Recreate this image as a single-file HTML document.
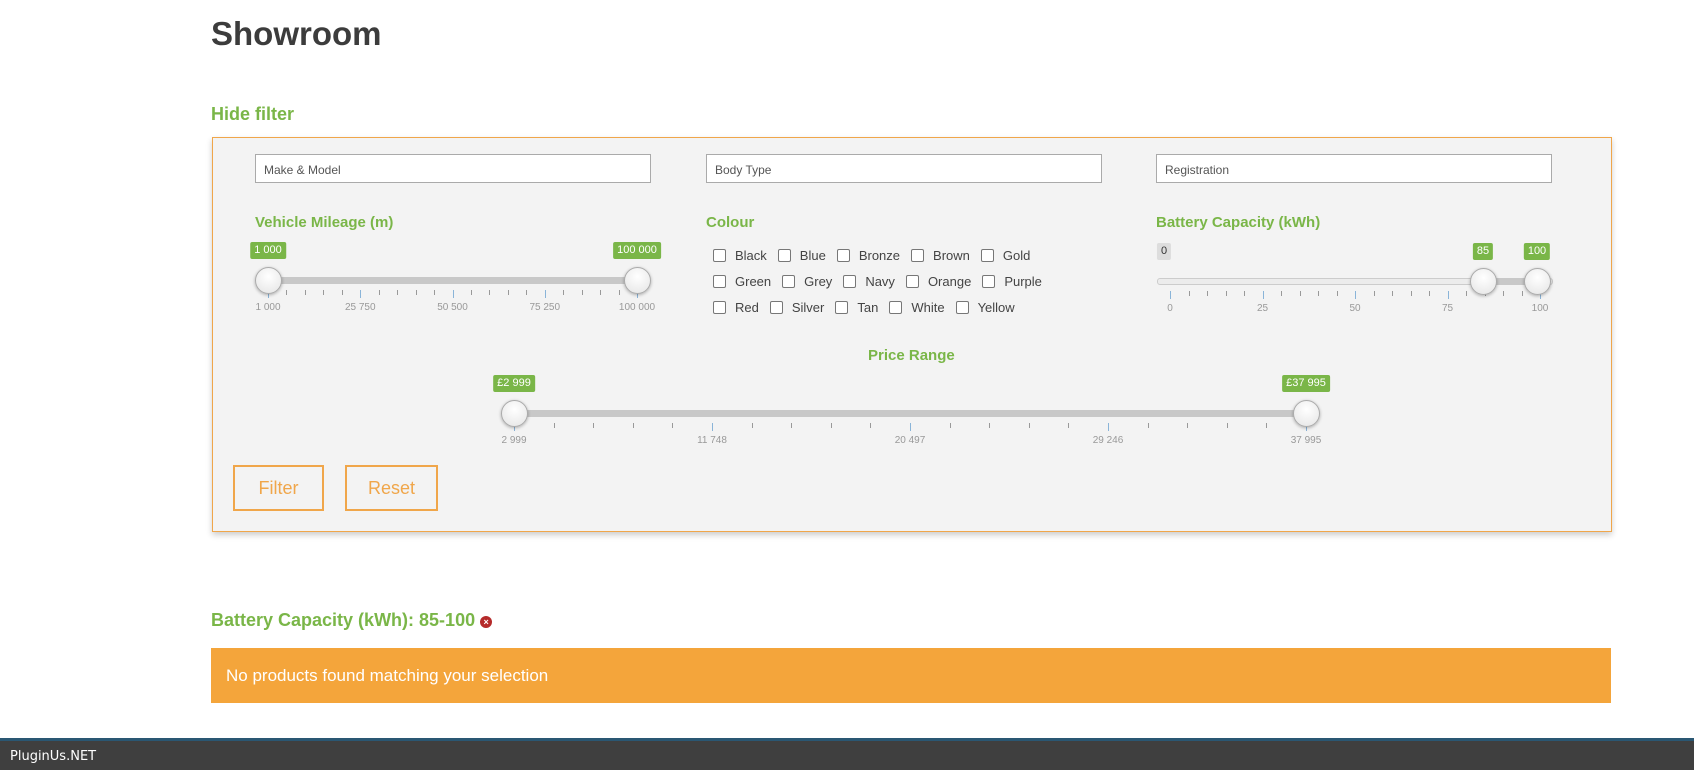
<!DOCTYPE html>
<html><head><meta charset="utf-8"><style>
*{box-sizing:border-box;margin:0;padding:0}
body{width:1694px;height:770px;position:relative;background:#fff;font-family:"Liberation Sans",sans-serif;overflow:hidden}
.a{position:absolute}
h1{position:absolute;left:211px;top:15px;font-size:33px;color:#3c3c3c;font-weight:bold}
.g{color:#7ab648;font-weight:bold}
.box{left:212px;top:137px;width:1400px;height:395px;background:#f3f3f3;border:1px solid #f0a64a;box-shadow:0 3px 6px rgba(0,0,0,.2)}
.inp{height:29px;width:396px;background:#fff;border:1px solid #aaa;font-size:12px;color:#555;padding:8px 8px}
.lbl{font-size:15px}
.bub{background:#7ab648;color:#fff;font-size:11px;padding:2px 4px;border-radius:2px;height:17px;line-height:13px;transform:translateX(-50%)}
.trk{height:7px;background:#c8c8c8;border-radius:3px;margin-top:-3px}
.thumb{width:27px;height:27px;border-radius:50%;background:radial-gradient(circle at 50% 35%,#fff,#e4e4e4);border:1px solid #aaa;box-shadow:0 1px 3px rgba(0,0,0,.3);margin:-13px 0 0 -13px}
.tk{width:1px;background:#999;height:5px}
.tk.M{background:#8ab4d8;height:8px}
.tl{font-size:10px;color:#999;transform:translateX(-50%)}
.cb{font-size:13px;color:#444;white-space:nowrap}
.cb i{font-style:normal;margin-right:11px}
.cb span{display:inline-block;width:13px;height:13px;border:1px solid #777;border-radius:2px;background:#fff;vertical-align:-2px;margin-right:9px}
.btn{border:2px solid #f0a64a;color:#f0a64a;font-size:18px;text-align:center;line-height:42px;height:46px}
</style></head><body>
<h1>Showroom</h1>
<div class="a g" style="left:211px;top:104px;font-size:18px">Hide filter</div>
<div class="a box"></div>
<div class="a inp" style="left:255px;top:154px">Make &amp; Model</div>
<div class="a inp" style="left:706px;top:154px">Body Type</div>
<div class="a inp" style="left:1156px;top:154px">Registration</div>
<div class="a g lbl" style="left:255px;top:214px">Vehicle Mileage (m)</div>
<div class="a g lbl" style="left:706px;top:214px">Colour</div>
<div class="a g lbl" style="left:1156px;top:214px">Battery Capacity (kWh)</div>
<div class="a g lbl" style="left:868px;top:347px">Price Range</div>
<div class="a cb" style="left:713px;top:248px"><span></span><i>Black</i><span></span><i>Blue</i><span></span><i>Bronze</i><span></span><i>Brown</i><span></span><i>Gold</i></div>
<div class="a cb" style="left:713px;top:274px"><span></span><i>Green</i><span></span><i>Grey</i><span></span><i>Navy</i><span></span><i>Orange</i><span></span><i>Purple</i></div>
<div class="a cb" style="left:713px;top:300px"><span></span><i>Red</i><span></span><i>Silver</i><span></span><i>Tan</i><span></span><i>White</i><span></span><i>Yellow</i></div>
<div id="s"></div>
<div class="a btn" style="left:233px;top:465px;width:91px">Filter</div>
<div class="a btn" style="left:345px;top:465px;width:93px">Reset</div>
<div class="a g" style="left:211px;top:610px;font-size:18px">Battery Capacity (kWh): 85-100 <span style="display:inline-block;width:12px;height:12px;border-radius:50%;background:#b52a2a;color:#fff;font-size:9px;line-height:12px;text-align:center;vertical-align:1px">×</span></div>
<div class="a" style="left:211px;top:648px;width:1400px;height:55px;background:#f4a53b;color:#fff;font-size:17px;padding:18px 15px">No products found matching your selection</div>
<div class="a" style="left:0;top:738px;width:1694px;height:32px;background:#3f3f3f;border-top:3px solid #2a5773;color:#fff;font-size:13px;padding:8px 10px;font-family:'DejaVu Sans',sans-serif">PluginUs.NET</div>
<script>
var h='';
function sl(x0,x1,y,labels,th,bubs,bar,light){
 var n=labels.length-1,step=(x1-x0)/n;
 if(light)h+='<div class="a trk" style="left:'+(x0-13)+'px;top:'+y+'px;width:'+(x1-x0+26)+'px;background:#ececec;border:1px solid #ccc"></div>';
 if(bar)h+='<div class="a trk" style="left:'+bar[0]+'px;top:'+y+'px;width:'+(bar[1]-bar[0])+'px"></div>';
 for(var i=0;i<=n*5;i++){var x=x0+i*step/5,M=i%5==0;h+='<div class="a tk'+(M?' M':'')+'" style="left:'+Math.round(x)+'px;top:'+(y+10)+'px"></div>';}
 labels.forEach(function(l,i){h+='<div class="a tl" style="left:'+(x0+i*step)+'px;top:'+(y+22)+'px">'+l+'</div>'});
 th.forEach(function(t){h+='<div class="a thumb" style="left:'+t+'px;top:'+y+'px"></div>'});
 bubs.forEach(function(b){h+='<div class="a bub" style="left:'+b[0]+'px;top:'+(y-38)+'px;'+(b[2]?'background:#ddd;color:#333':'')+'">'+b[1]+'</div>'});
}
sl(268,637,280,['1 000','25 750','50 500','75 250','100 000'],[268,637],[[268,'1 000'],[637,'100 000']],[268,637],0);
sl(1170,1540,281,['0','25','50','75','100'],[1483,1537],[[1164,'0',1],[1483,'85'],[1537,'100']],[1483,1537],1);
sl(514,1306,413,['2 999','11 748','20 497','29 246','37 995'],[514,1306],[[514,'£2 999'],[1306,'£37 995']],[514,1306],0);
document.getElementById('s').innerHTML=h;
</script>
</body></html>
